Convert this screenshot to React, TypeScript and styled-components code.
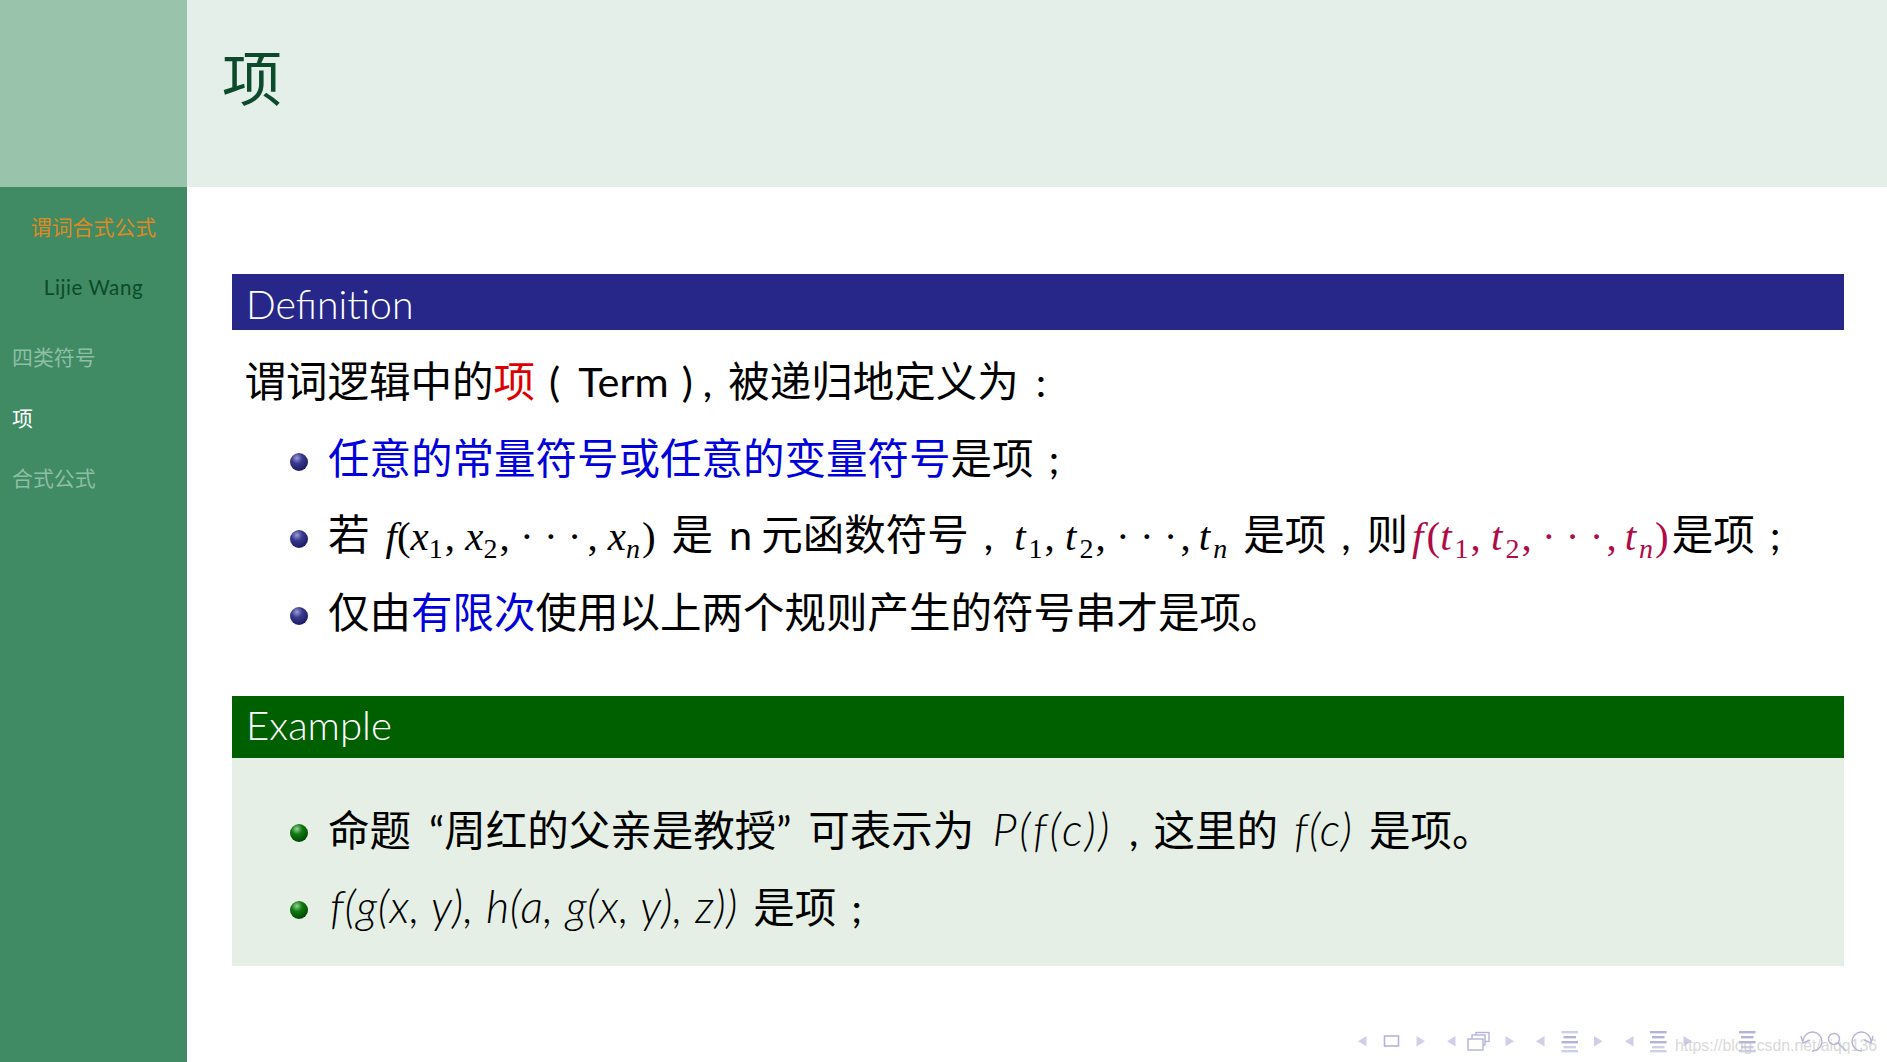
import React from "react";
import styled, { createGlobalStyle } from "styled-components";

const colors = {
  sideTop: "#9ac3ac",
  side: "#408a64",
  head: "#e5efe9",
  darkGreen: "#0b4a2a",
  orange: "#dd8a22",
  faded: "#8dbfa5",
  navy: "#27278a",
  green: "#006000",
  exampleBody: "#e5efe5",
  blue: "#0000dc",
  red: "#dc0000",
  plum: "#b00a48",
  nav: "#cfcfe9",
  navDark: "#b4b4da",
};

const sans = `Lato, "Noto Sans CJK SC", sans-serif`;

const GlobalStyle = createGlobalStyle`
  html, body { margin: 0; padding: 0; background: #fff; }
  body { font-family: ${sans}; color: #000; }
`;

const Page = styled.div`
  width: 1887px;
  height: 1062px;
  display: flex;
  overflow: hidden;
`;

//sidebar
const Sidebar = styled.aside`
  width: 187px;
  flex: none;
  display: flex;
  flex-direction: column;
  background: ${colors.side};
`;
const SideTop = styled.div`
  height: 187px;
  background: ${colors.sideTop};
`;
const DeckTitle = styled.div`
  margin-top: 28px;
  height: 24px;
  line-height: 24px;
  text-align: center;
  font-size: 20.9px;
  color: ${colors.orange};
`;
const Author = styled.div`
  margin-top: 36px;
  height: 24px;
  line-height: 24px;
  text-align: center;
  font-size: 20.6px;
  letter-spacing: 0.55px;
  color: ${colors.darkGreen};
`;
const NavList = styled.nav`
  margin-top: 46px;
  padding-left: 12px;
  display: flex;
  flex-direction: column;
  gap: 36.5px;
`;
const NavItem = styled.div<{ $active?: boolean }>`
  height: 24px;
  line-height: 24px;
  font-size: 20.9px;
  color: ${(p) => (p.$active ? "#fff" : colors.faded)};
`;

//main column
const Main = styled.main`
  flex: 1;
  min-width: 0;
  display: flex;
  flex-direction: column;
`;
const Header = styled.header`
  height: 187px;
  flex: none;
  background: ${colors.head};
  padding-left: 35px;
  box-sizing: border-box;
`;
const Title = styled.h1`
  margin: 0;
  padding-top: 47px;
  font-size: 60px;
  line-height: 62px;
  font-weight: 400;
  color: ${colors.darkGreen};
`;
const Content = styled.div`
  padding: 87px 43px 0 45px;
  display: flex;
  flex-direction: column;
`;
const BlockTitle = styled.div<{ $bg: string; $h: number; $lift: number; $size: number }>`
  height: ${(p) => p.$h}px;
  line-height: ${(p) => p.$h + p.$lift}px;
  background: ${(p) => p.$bg};
  color: #fff;
  font-size: ${(p) => p.$size}px;
  font-weight: 300;
  padding-left: 14px;
`;
const Line = styled.div`
  height: 77px;
  line-height: 77px;
  font-size: 41.5px;
  white-space: nowrap;
  display: flex;
  align-items: center;
`;
const Lead = styled(Line)`
  padding-left: 12.5px;
  margin-top: 13px;
`;
const Item = styled(Line)`
  padding-left: 57px;
`;
const Bullet = styled.span<{ $tone: "navy" | "green" }>`
  width: 18px;
  height: 18px;
  flex: none;
  border-radius: 50%;
  margin: 7px 20px 0 1px;
  background: ${(p) =>
    p.$tone === "navy"
      ? "radial-gradient(circle at 38% 28%, #9c9cd4 0%, #3a3a90 32%, #14145a 85%)"
      : "radial-gradient(circle at 38% 28%, #98d098 0%, #107a10 32%, #003c00 85%)"};
`;
const Tint = styled.span<{ $c: string }>`
  color: ${(p) => p.$c};
`;
const Gap = styled.span<{ $w: number }>`
  display: inline-block;
  width: ${(p) => p.$w}px;
`;
const Formula = styled.span<{ $c?: string }>`
  font-family: "Liberation Serif", serif;
  font-size: 41px;
  color: ${(p) => p.$c || "#000"};
  white-space: pre;
`;
const Var = styled.i<{ $pad?: number }>`
  font-style: italic;
  padding-right: ${(p) => p.$pad || 0}px;
`;
const Sub = styled.sub`
  font-size: 28px;
  line-height: 0;
  vertical-align: -8px;
  margin-right: 2px;
`;
const SansFormula = styled.span<{ $track?: number }>`
  font-family: Lato, sans-serif;
  font-style: italic;
  font-weight: 300;
  font-size: 45px;
  letter-spacing: ${(p) => p.$track || 0}px;
  white-space: pre;
`;
const ExampleBody = styled.div`
  background: ${colors.exampleBody};
  height: 208px;
  box-sizing: border-box;
  padding-top: 33px;
`;
const Spacer = styled.div<{ $h: number }>`
  height: ${(p) => p.$h}px;
`;

//navigation symbols
const Footer = styled.footer`
  position: relative;
  margin-top: auto;
  height: 52px;
  display: flex;
  justify-content: flex-end;
`;
const Watermark = styled.span`
  position: absolute;
  left: 1488px;
  top: 26px;
  line-height: 20px;
  font-family: "Liberation Sans", sans-serif;
  font-size: 15.8px;
  white-space: nowrap;
  color: rgba(190, 190, 190, 0.6);
`;

const Arrow: React.FC<{ x: number; left?: boolean }> = ({ x, left }) => (
  <polygon
    points={left ? `${x + 8.5},26 ${x},31.3 ${x + 8.5},36.6` : `${x},26 ${x + 8.5},31.3 ${x},36.6`}
    fill={colors.nav}
  />
);

const Lines: React.FC<{ x: number; dark?: boolean }> = ({ x, dark }) => (
  <g>
    <rect x={x} y={21} width={16.5} height={2.4} fill={dark ? colors.navDark : colors.nav} />
    <rect x={x + 2} y={26} width={12.5} height={2.4} fill={colors.navDark} />
    <rect x={x} y={31} width={16.5} height={2.4} fill={colors.navDark} />
    <rect x={x + 2} y={36} width={12.5} height={2.4} fill={colors.nav} />
    <rect x={x} y={40} width={16.5} height={2.4} fill={colors.nav} />
  </g>
);

const NavSymbols: React.FC = () => (
  <svg width="547" height="52" viewBox="0 0 547 52">
    <Arrow x={18} left />
    <rect x={44.5} y={26} width={14} height={10} fill="none" stroke={colors.navDark} strokeWidth="1.6" />
    <Arrow x={76.5} />
    <Arrow x={107} left />
    <g fill="#fff" stroke={colors.navDark} strokeWidth="1.4">
      <rect x={136} y={22.5} width={13} height={9} />
      <rect x={132} y={25} width={13} height={10} />
      <rect x={128} y={29} width={15} height={11} />
    </g>
    <Arrow x={165.5} />
    <Arrow x={196} left />
    <Lines x={221.5} />
    <Arrow x={254} />
    <Arrow x={285} left />
    <Lines x={310} dark />
    <Arrow x={343.5} />
    <Lines x={399} dark />
    <g fill="none" stroke={colors.navDark} strokeWidth="1.4">
      <path d="M463 31 A9.5 9.5 0 1 1 472 41" />
      <path d="M461 26 L463 33 L470 30" />
      <circle cx="494" cy="29" r="5.5" />
      <path d="M498 33 L506 41" />
      <path d="M531 31 A9.5 9.5 0 1 0 522 41" />
      <path d="M533 26 L531 33 L524 30" />
    </g>
  </svg>
);

const TermList: React.FC = () => (
  <>
    <Var $pad={3}>t</Var><Sub>1</Sub>, <Var $pad={3}>t</Var><Sub>2</Sub>, · · ·<Gap $w={3} />,<Gap $w={8} />
    <Var $pad={3}>t</Var><Sub><Var>n</Var></Sub>
  </>
);

const App: React.FC = () => (
  <>
    <GlobalStyle />
    <Page>
      <Sidebar>
        <SideTop />
        <DeckTitle>谓词合式公式</DeckTitle>
        <Author>Lijie Wang</Author>
        <NavList>
          <NavItem>四类符号</NavItem>
          <NavItem $active>项</NavItem>
          <NavItem>合式公式</NavItem>
        </NavList>
      </Sidebar>
      <Main>
        <Header>
          <Title>项</Title>
        </Header>
        <Content>
          <BlockTitle $bg={colors.navy} $h={56} $lift={3} $size={39.2}>Definition</BlockTitle>
          <Lead>
            <span>
              谓词逻辑中的<Tint $c={colors.red}>项</Tint>
              <Gap $w={14} />(<Gap $w={18} />Term<Gap $w={13} />)<Gap $w={10} />,<Gap $w={16} />
              被递归地定义为<Gap $w={17} />:
            </span>
          </Lead>
          <Item>
            <Bullet $tone="navy" />
            <span>
              <Tint $c={colors.blue}>任意的常量符号或任意的变量符号</Tint>是项<Gap $w={15} />;
            </span>
          </Item>
          <Item>
            <Bullet $tone="navy" />
            <span>
              若<Gap $w={16} />
              <Formula>
                <Var>f</Var>(<Var>x</Var><Sub>1</Sub>, <Var>x</Var><Sub>2</Sub>, · · ·<Gap $w={6} />,<Gap $w={10} /><Var>x</Var><Sub><Var>n</Var></Sub>)
              </Formula>
              <Gap $w={16} />是<Gap $w={16} />n<Gap $w={9} />元函数符号<Gap $w={15} />,<Gap $w={21} />
              <Formula>
                <TermList />
              </Formula>
              <Gap $w={14} />是项<Gap $w={15} />,<Gap $w={16} />则<Gap $w={4} />
              <Formula $c={colors.plum}>
                <Var $pad={3}>f</Var>(<TermList />)
              </Formula>
              <Gap $w={3} />是项<Gap $w={15} />;
            </span>
          </Item>
          <Item>
            <Bullet $tone="navy" />
            <span>
              仅由<Tint $c={colors.blue}>有限次</Tint>使用以上两个规则产生的符号串才是项。
            </span>
          </Item>
          <Spacer $h={45} />
          <BlockTitle $bg={colors.green} $h={62} $lift={-4} $size={40.2}>Example</BlockTitle>
          <ExampleBody>
            <Item>
              <Bullet $tone="green" />
              <span>
                命题<Gap $w={18} />“周红的父亲是教授”<Gap $w={17} />可表示为<Gap $w={18} />
                <SansFormula $track={2.6}>P(f(c))</SansFormula>
                <Gap $w={17} />,<Gap $w={15} />这里的<Gap $w={16} />
                <SansFormula $track={1}>f(c)</SansFormula>
                <Gap $w={16} />是项。
              </span>
            </Item>
            <Item>
              <Bullet $tone="green" />
              <span>
                <Gap $w={2} />
                <SansFormula $track={0.65}>f(g(x, y), h(a, g(x, y), z))</SansFormula>
                <Gap $w={15} />是项<Gap $w={15} />;
              </span>
            </Item>
          </ExampleBody>
        </Content>
        <Footer>
          <NavSymbols />
          <Watermark>https://blog.csdn.net/aiqq136</Watermark>
        </Footer>
      </Main>
    </Page>
  </>
);

export default App;
